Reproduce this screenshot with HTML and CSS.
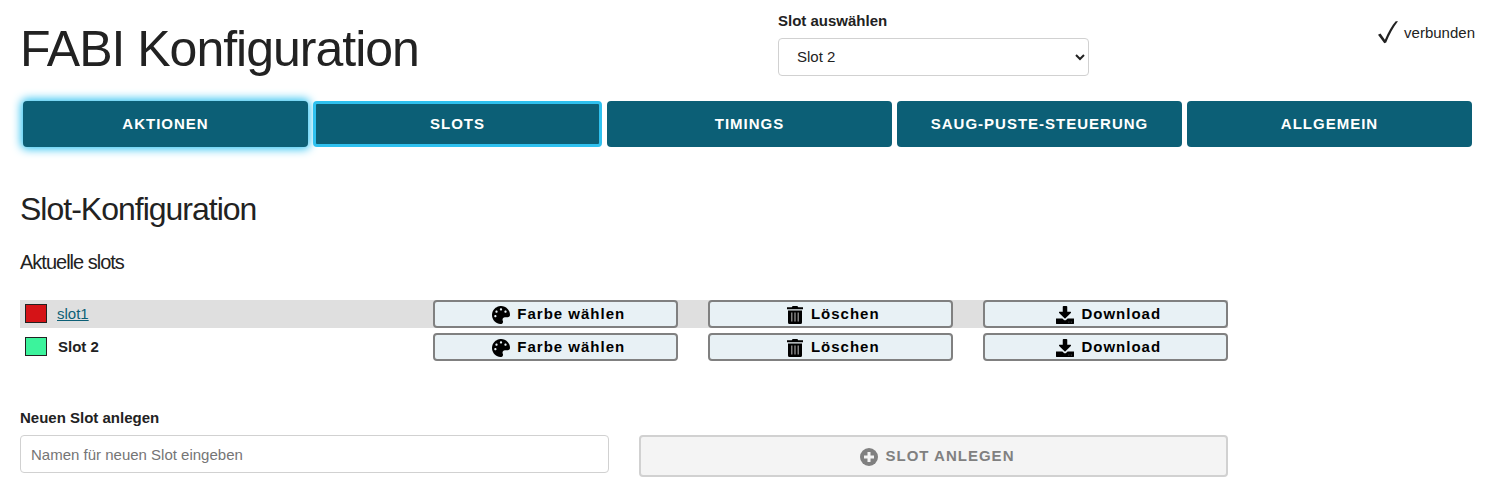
FILE: index.html
```html
<!DOCTYPE html>
<html lang="de">
<head>
<meta charset="utf-8">
<title>FABI Konfiguration</title>
<link rel="stylesheet" href="styles.css">
</head>
<body>
<svg class="sprite" aria-hidden="true">
  <symbol id="palette" viewBox="0 0 512 512"><path d="M204.3 5C104.9 24.4 24.8 104.3 5.2 203.4c-37 187 131.7 326.4 258.8 306.7 41.2-6.4 61.4-54.6 42.5-91.7-23.1-45.4 9.9-98.4 60.9-98.4h79.7c35.8 0 64.8-29.6 64.9-65.3C511.5 97.1 368.1-26.9 204.3 5zM96 320c-17.7 0-32-14.3-32-32s14.3-32 32-32 32 14.3 32 32-14.3 32-32 32zm32-128c-17.7 0-32-14.3-32-32s14.3-32 32-32 32 14.3 32 32-14.3 32-32 32zm128-64c-17.7 0-32-14.3-32-32s14.3-32 32-32 32 14.3 32 32-14.3 32-32 32zm128 64c-17.7 0-32-14.3-32-32s14.3-32 32-32 32 14.3 32 32-14.3 32-32 32z"/></symbol>
  <symbol id="trash" viewBox="0 0 16 18"><path d="M0 1.2h4.8L5.6 0h4.8l.8 1.2H16v2H0zM1 4.500h14V16.500q0 1.500-1.500 1.500h-11Q1 18 1 16.500z"/><path class="trash-bars" d="M4 6.500h1.500v9H4zM7.250 6.500h1.500v9h-1.500zM10.500 6.500H12v9h-1.500z"/></symbol>
  <symbol id="download" viewBox="0 0 512 512"><path d="M216 0h80c13.300 0 24 10.700 24 24v138h87.700c17.800 0 26.700 21.500 14.100 34.100L269.700 348.300c-7.500 7.500-19.800 7.500-27.300 0L90.100 196.100c-12.600-12.600-3.700-34.100 14.100-34.100H192V24c0-13.300 10.700-24 24-24zm296 365v134c0 8-5 13-13 13H13c-8 0-13-5-13-13V365c0-8 5-13 13-13h167.700l39 39c20.100 20.100 52.500 20.100 72.600 0l39-39H499c8 0 13 5 13 13zm-134 91c0-6-5-10-10-10s-10 4-10 10 5 10 10 10 10-4 10-10zm64 0c0-6-5-10-10-10s-10 4-10 10 5 10 10 10 10-4 10-10z"/></symbol>
</svg>
<header class="header">
  <h1 class="title">FABI Konfiguration</h1>
  <div class="picker">
    <label class="label" for="slot">Slot auswählen</label>
    <select class="select" id="slot"><option>Slot 2</option></select>
  </div>
  <div class="status">
    <svg class="check" viewBox="0 0 20 23"><path d="M0 13.800L2.500 12.500 6.900 18.800C10 11.200 14 4.500 17.700.3H20C15.300 6.500 11.300 13.500 8.200 21.500L6.300 22.200z"/></svg>
    <span>verbunden</span>
  </div>
</header>
<nav class="tabs">
  <button class="tab tab-glow">Aktionen</button>
  <button class="tab tab-current">Slots</button>
  <button class="tab">Timings</button>
  <button class="tab">Saug-Puste-Steuerung</button>
  <button class="tab">Allgemein</button>
</nav>
<main class="main">
  <h2 class="heading">Slot-Konfiguration</h2>
  <h3 class="subheading">Aktuelle slots</h3>
  <div class="slots">
    <div class="slot slot-shaded">
      <div class="slot-name"><span class="swatch swatch-red"></span><a class="link" href="#">slot1</a></div>
      <button class="action"><svg class="icon"><use href="#palette"/></svg>Farbe wählen</button>
      <button class="action"><svg class="icon icon-narrow"><use href="#trash"/></svg>Löschen</button>
      <button class="action"><svg class="icon"><use href="#download"/></svg>Download</button>
    </div>
    <div class="slot">
      <div class="slot-name"><span class="swatch swatch-green"></span><strong class="active-name">Slot 2</strong></div>
      <button class="action"><svg class="icon"><use href="#palette"/></svg>Farbe wählen</button>
      <button class="action"><svg class="icon icon-narrow"><use href="#trash"/></svg>Löschen</button>
      <button class="action"><svg class="icon"><use href="#download"/></svg>Download</button>
    </div>
  </div>
  <div class="create">
    <div>
      <label class="label" for="name">Neuen Slot anlegen</label>
      <input class="input" id="name" placeholder="Namen für neuen Slot eingeben">
    </div>
    <button class="add" disabled><svg class="icon" viewBox="0 0 18 18"><circle cx="9" cy="9" r="9" fill="#808080"/><path d="M7.500 4h3v3.500H14v3h-3.500V14h-3v-3.500H4v-3h3.500z" fill="#f4f4f4"/></svg><span class="add-text">Slot anlegen</span></button>
  </div>
</main>
</body>
</html>
```
FILE: styles.css
```css
* { box-sizing: border-box; }
body { margin: 0; padding: 0 20px; background: #fff; color: #222; font: 15px/24px "Liberation Sans", Arial, sans-serif; }
button, input, select { font-family: inherit; margin: 0; }
.sprite { display: none; }
.header { display: grid; grid-template-columns: 758px 311px 1fr; height: 101px; width: 1455px; }
.title { margin: 19px 0 0; font-size: 50px; line-height: 60px; font-weight: 300; letter-spacing: -1px; }
.picker { padding-top: 9px; }
.label { display: block; font-weight: 600; line-height: 24px; margin-bottom: 5px; }
.select { display: block; width: 311px; height: 38px; border: 1px solid #d1d1d1; border-radius: 4px; background: #fff; color: #222; font-size: 15px; padding: 5px 6px 7px 14px; border-right-width: 1px; }
.status { display: flex; justify-content: flex-end; gap: 6px; padding-top: 21px; }
.check { width: 20px; height: 23px; fill: #222; }
.tabs { display: grid; grid-template-columns: 285px 289px 285px 285px 285px; gap: 5px; padding-left: 3px; }
.tab { height: 46px; border: 0; border-radius: 4px; padding: 0; background: #0c5f76; color: #fff; font-size: 15px; line-height: 46px; font-weight: 600; letter-spacing: 1px; text-transform: uppercase; }
.tab-glow { box-shadow: 0 0 10px 2px #2bc1f1; }
.tab-current { border: 3px solid #2fc1ef; line-height: 40px; }
.main { width: 1208px; padding-top: 42px; }
.heading { margin: 0; font-size: 32px; line-height: 40px; font-weight: 300; letter-spacing: -1px; }
.subheading { margin: 18px 0 23px; font-size: 20px; line-height: 30px; font-weight: 300; letter-spacing: -1px; }
.slots { display: grid; gap: 5px; }
.slot { display: grid; grid-template-columns: 383px repeat(3, 245px); column-gap: 30px; height: 28px; }
.slot-shaded { background: #dfdfdf; }
.slot-name { display: flex; align-items: center; padding-left: 5px; gap: 10px; }
.swatch { width: 22px; height: 19px; margin-bottom: 2px; border: 1px solid #222; }
.swatch-red { background: #d51317; }
.swatch-green { background: #3cf39c; }
.link { color: #0c5f76; text-decoration: underline; }
.active-name { padding-left: 1px; }
.action { display: flex; align-items: center; justify-content: center; gap: 7.5px; height: 28px; padding: 0 0 0 6px; border: 2px solid #808080; border-radius: 4px; background: #e8f1f5; color: #000; font-size: 15px; font-weight: 600; letter-spacing: 1px; line-height: 24px; }
.icon { width: 18px; height: 18px; margin-top: 2px; fill: currentColor; flex: none; }
.icon-narrow { width: 16px; }
.trash-bars { fill: #808080; }
.create { display: grid; grid-template-columns: 589px 589px; gap: 30px; margin-top: 45px; }
.input { display: block; width: 589px; height: 38px; border: 1px solid #d1d1d1; border-radius: 4px; padding: 6px 10px; font-size: 15px; background: #fff; }
.input::placeholder { color: #757575; }
.add { display: flex; align-items: center; justify-content: center; gap: 8px; height: 42px; margin-top: 29px; padding: 0 0 0 7px; border: 2px solid #d1d1d1; border-radius: 4px; background: #f4f4f4; color: #808080; font-size: 15px; font-weight: 600; letter-spacing: 1px; text-transform: uppercase; }
.add-text { margin-bottom: 2px; }
```
